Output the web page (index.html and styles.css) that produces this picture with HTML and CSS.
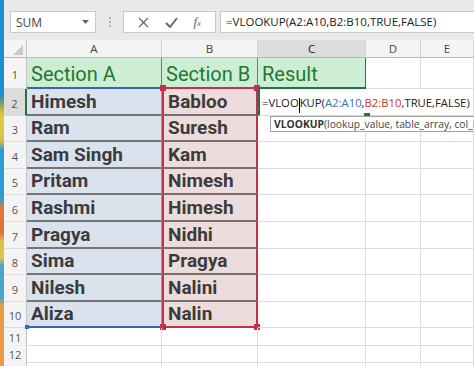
FILE: index.html
```html
<!DOCTYPE html>
<html lang="en">
<head>
    <meta charset="UTF-8">
    <title>VLOOKUP - Excel</title>
    <link rel="stylesheet" href="styles.css">
</head>
<body>
<div class="window">
    <div class="strip"></div>
    <div class="app">

        <div class="formula-bar">
            <div class="namebox">
                <span>SUM</span>
                <svg width="7" height="4" viewBox="0 0 7 4"><path d="M0 0h7L3.5 4z" fill="#666"/></svg>
            </div>
            <div class="grip"><i></i><i></i><i></i></div>
            <div class="fbuttons">
                <svg width="11" height="11" viewBox="0 0 11 11"><path d="M1 1l9 9M10 1l-9 9" stroke="#6a6a6a" stroke-width="1.3" fill="none"/></svg>
                <svg width="13" height="11" viewBox="0 0 13 11"><path d="M1 6l4 4L12 1" stroke="#6a6a6a" stroke-width="2" fill="none"/></svg>
                <span class="fx">f<small>x</small></span>
            </div>
            <div class="finput">=VLOOKUP(A2:A10,B2:B10,TRUE,FALSE)</div>
        </div>

        <div class="sheet">
            <div class="row row-head">
                <div class="corner"><span></span></div>
                <div class="ch">A</div><div class="ch">B</div><div class="ch sel">C</div><div class="ch">D</div><div class="ch">E</div>
            </div>

            <div class="row row-1">
                <div class="rh">1</div>
                <div class="c head ha">Section A</div>
                <div class="c head hb">Section B</div>
                <div class="c head result">Result</div>
                <div class="c"></div><div class="c"></div>
            </div>

            <div class="row">
                <div class="rh sel">2</div>
                <div class="c a">Himesh</div>
                <div class="c b first">Babloo</div>
                <div class="c edit">=VLOO<span class="caret"></span>KUP(<span class="ref-a">A2:A10</span>,<span class="ref-b">B2:B10</span>,TRUE,FALSE)
                    <div class="tip"><b>VLOOKUP</b>(lookup_value, table_array, col_inc</div>
                </div>
            </div>

            <div class="row short">
                <div class="rh">3</div><div class="c a">Ram</div><div class="c b">Suresh</div><div class="c"></div><div class="c"></div><div class="c"></div>
            </div>
            <div class="row">
                <div class="rh">4</div><div class="c a">Sam Singh</div><div class="c b">Kam</div><div class="c"></div><div class="c"></div><div class="c"></div>
            </div>
            <div class="row short">
                <div class="rh">5</div><div class="c a">Pritam</div><div class="c b">Nimesh</div><div class="c"></div><div class="c"></div><div class="c"></div>
            </div>
            <div class="row">
                <div class="rh">6</div><div class="c a">Rashmi</div><div class="c b">Himesh</div><div class="c"></div><div class="c"></div><div class="c"></div>
            </div>
            <div class="row">
                <div class="rh">7</div><div class="c a">Pragya</div><div class="c b">Nidhi</div><div class="c"></div><div class="c"></div><div class="c"></div>
            </div>
            <div class="row short">
                <div class="rh">8</div><div class="c a">Sima</div><div class="c b">Pragya</div><div class="c"></div><div class="c"></div><div class="c"></div>
            </div>
            <div class="row">
                <div class="rh">9</div><div class="c a">Nilesh</div><div class="c b">Nalini</div><div class="c"></div><div class="c"></div><div class="c"></div>
            </div>
            <div class="row short">
                <div class="rh">10</div><div class="c a last">Aliza</div><div class="c b last">Nalin</div><div class="c"></div><div class="c"></div><div class="c"></div>
            </div>

            <div class="row small">
                <div class="rh">11</div><div class="c"></div><div class="c"></div><div class="c"></div><div class="c"></div><div class="c"></div>
            </div>
            <div class="row small">
                <div class="rh">12</div><div class="c"></div><div class="c"></div><div class="c"></div><div class="c"></div><div class="c"></div>
            </div>
            <div class="row small">
                <div class="rh"></div><div class="c"></div><div class="c"></div><div class="c"></div><div class="c"></div><div class="c"></div>
            </div>
        </div>

    </div>
</div>
</body>
</html>
```

FILE: styles.css
```css
* {
    box-sizing: border-box;
}
body {
    margin: 0;
    width: 474px;
    height: 366px;
    overflow: hidden;
    font-family: "Open Sans", sans-serif;
    background-color: #fff;
    color: #333;
}
.window {
    display: flex;
    height: 366px;
}
.strip {
    width: 4px;
    flex: none;
    background: linear-gradient(to bottom,
        #1d8fcf 0, #1d8fcf 95px, #8fa64a 105px, #e3c843 115px, #d9c447 140px,
        #2b9cd4 150px, #2b9cd4 198px, #e2763d 208px, #e0703a 232px,
        #dcc24b 242px, #dcc24b 258px, #48a6c8 266px, #48a6c8 298px,
        #e99b47 306px, #e99b47 366px);
}
.app {
    flex: 1;
    min-width: 0;
    display: flex;
    flex-direction: column;
}

/* formula bar */
.formula-bar {
    height: 40px;
    flex: none;
    display: flex;
    align-items: flex-start;
    padding: 11px 0 0 6px;
    background-color: #e9e9e9;
}
.namebox {
    width: 86px;
    height: 22px;
    display: flex;
    align-items: center;
    justify-content: space-between;
    padding: 0 6px 0 5px;
    background-color: #fff;
    border: 1px solid #c9c9c9;
    font-size: 12px;
    color: #444;
}
.grip {
    width: 27px;
    height: 22px;
    display: flex;
    flex-direction: column;
    align-items: center;
    justify-content: center;
    gap: 2px;
}
.grip i {
    width: 2px;
    height: 2px;
    background-color: #b4b4b4;
}
.fbuttons {
    width: 93px;
    height: 22px;
    display: flex;
    align-items: center;
    justify-content: space-around;
    padding: 0 6px;
    background-color: #fff;
    border: 1px solid #c9c9c9;
}
.fx {
    font-family: "Liberation Serif", serif;
    font-style: italic;
    font-size: 13px;
    color: #666;
}
.fx small {
    font-size: 9px;
}
.finput {
    flex: 1;
    height: 22px;
    margin-left: 4px;
    padding-left: 5px;
    background-color: #fff;
    border: 1px solid #c9c9c9;
    border-right: none;
    font-size: 11.5px;
    line-height: 20px;
    color: #222;
    white-space: nowrap;
    overflow: hidden;
}

/* sheet */
.sheet {
    flex: 1;
    overflow: hidden;
}
.row {
    display: grid;
    grid-template-columns: 23px 135px 96px 108px 55px 1fr;
    height: 27px;
}
.row.short {
    height: 26px;
}
.row.small {
    height: 17px;
}
.row-head {
    height: 18px;
}
.row-1 {
    height: 31px;
}
.corner {
    position: relative;
    background-color: #f4f4f4;
    border-right: 1px solid #c6c6c6;
    border-bottom: 1px solid #b9b9b9;
}
.corner span {
    position: absolute;
    right: 3px;
    bottom: 2px;
    width: 0;
    height: 0;
    border-left: 10px solid transparent;
    border-bottom: 10px solid #c9c9c9;
}
.ch {
    display: flex;
    align-items: center;
    justify-content: center;
    background-color: #f4f4f4;
    border-right: 1px solid #d2d2d2;
    border-bottom: 1px solid #b9b9b9;
    font-size: 11.5px;
    color: #444;
}
.ch.sel {
    background-color: #dcdcdc;
    color: #222;
}
.rh {
    display: flex;
    align-items: center;
    justify-content: center;
    padding-top: 2px;
    background-color: #f4f4f4;
    border-right: 1px solid #c6c6c6;
    border-bottom: 1px solid #dcdcdc;
    font-size: 11px;
    color: #555;
}
.rh.sel {
    background-color: #dcdcdc;
    border-right: 2px solid #217346;
}
.c {
    position: relative;
    display: flex;
    align-items: flex-end;
    padding: 0 4px 2px;
    border-right: 1px solid #dcdcdc;
    border-bottom: 1px solid #dcdcdc;
    white-space: nowrap;
    font-family: Roboto, sans-serif;
}
.head {
    padding-bottom: 1px;
    background-color: #cdeed4;
    border-right: 1px solid #6f7c72;
    font-size: 20px;
    color: #1d7a2f;
}
.head.ha {
    border-bottom: 2px solid #3568b4;
}
.head.hb {
    border-bottom: 2px solid #c5304a;
}
.head.result {
    border-right: 1px solid #2f6f3f;
    border-bottom: 2px solid #217346;
}
.a, .b {
    padding-bottom: 1px;
    font-size: 19px;
    font-weight: bold;
    color: #3b3b3b;
}
.a {
    background-color: #dae2ee;
    border-right: 1px solid #9b9b9b;
    border-bottom: 2px solid #747474;
}
.b {
    background-color: #eddcdc;
    border-left: 2px solid #c5304a;
    border-right: 2px solid #c5304a;
    border-bottom: 2px solid #7a6d6d;
}
.a.last {
    border-bottom: 2px solid #3568b4;
}
.b.last {
    border-bottom: 2px solid #c5304a;
}
.b.first::before,
.b.first::after,
.b.last::before,
.b.last::after,
.a.last::before {
    content: "";
    position: absolute;
    width: 6px;
    height: 6px;
    background-color: #c5304a;
}
.b.first::before { left: -4px; top: -4px; }
.b.first::after { right: -4px; top: -4px; }
.b.last::before { left: -4px; bottom: -4px; }
.b.last::after { right: -4px; bottom: -4px; }
.a.last::before {
    left: -2px;
    bottom: -3px;
    width: 4px;
    height: 4px;
    background-color: #3568b4;
}

/* cell in edit mode */
.edit {
    grid-column: span 3;
    padding: 0 0 5px 2px;
    background-color: #fff;
    border-left: 2px solid #217346;
    font-family: "Open Sans", sans-serif;
    font-size: 11.3px;
    color: #222;
}
.edit::after {
    content: "";
    position: absolute;
    left: 104px;
    bottom: -3px;
    width: 6px;
    height: 5px;
    background-color: #217346;
}
.caret {
    display: inline-block;
    width: 1px;
    height: 15px;
    margin: 0 0 -3px;
    background-color: #000;
}
.ref-a {
    color: #3a6fc4;
}
.ref-b {
    color: #c0392b;
}
.tip {
    position: absolute;
    top: 27px;
    left: 10px;
    width: 208px;
    height: 16px;
    padding: 0 0 0 3px;
    background-color: #fff;
    border: 1px solid #a3a3a3;
    border-right: none;
    font-size: 10.3px;
    line-height: 14px;
    color: #444;
    white-space: nowrap;
    overflow: hidden;
    z-index: 2;
}
.tip b {
    color: #333;
}
```
